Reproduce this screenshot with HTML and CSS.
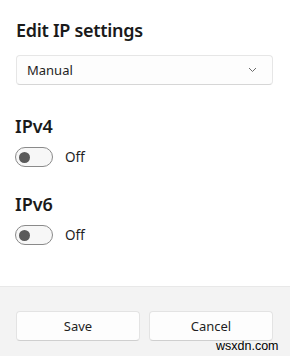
FILE: index.html
```html
<!DOCTYPE html>
<html lang="en">
<head>
<meta charset="utf-8">
<title>Edit IP settings</title>
<link rel="stylesheet" href="styles.css">
</head>
<body>
<div class="dialog">
  <div class="content">
    <h1 class="title">Edit IP settings</h1>
    <div class="select">
      <span class="select-text">Manual</span>
      <svg class="chevron" width="9" height="6" viewBox="0 0 9 6"><path d="M1 1 L4.5 4.5 L8 1" fill="none" stroke="#6b6b6b" stroke-width="1"/></svg>
    </div>
    <section class="ip">
      <h2 class="ip-title">IPv4</h2>
      <div class="toggle-row">
        <span class="toggle"><span class="knob"></span></span>
        <span class="toggle-label">Off</span>
      </div>
    </section>
    <section class="ip ip-second">
      <h2 class="ip-title">IPv6</h2>
      <div class="toggle-row">
        <span class="toggle"><span class="knob"></span></span>
        <span class="toggle-label">Off</span>
      </div>
    </section>
  </div>
  <div class="footer">
    <button class="btn">Save</button>
    <button class="btn">Cancel</button>
  </div>
  <span class="watermark">wsxdn.com</span>
</div>
</body>
</html>
```
FILE: styles.css
```css
html, body {
  margin: 0;
  padding: 0;
  background: #ffffff;
}
body {
  font-family: "Noto Sans", "Open Sans", sans-serif;
  color: #1b1b1b;
}
.dialog {
  position: relative;
  width: 290px;
  height: 356px;
  display: flex;
  flex-direction: column;
  background: #ffffff;
  overflow: hidden;
}
.content {
  padding: 18px 17px 0 16px;
  flex: 1;
}
.title {
  margin: 0;
  font-size: 18px;
  line-height: 24px;
  font-weight: 600;
  letter-spacing: -0.3px;
  color: #1a1a1a;
}
.select {
  margin-top: 13px;
  height: 30px;
  box-sizing: border-box;
  border: 1px solid #e6e6e6;
  border-bottom-color: #d6d6d6;
  border-radius: 4px;
  background: #fdfdfd;
  display: flex;
  align-items: center;
  justify-content: space-between;
  padding: 0 15px 0 10px;
}
.select-text {
  font-size: 13px;
  color: #1f1f1f;
}
.chevron {
  display: block;
}
.ip {
  margin-top: 29px;
  margin-left: -1px;
}
.ip-second {
  margin-top: 25px;
}
.ip-title {
  margin: 0;
  font-size: 18px;
  line-height: 24px;
  font-weight: 600;
  color: #1a1a1a;
}
.toggle-row {
  margin-top: 9px;
  display: flex;
  align-items: center;
  gap: 12px;
  height: 20px;
}
.toggle {
  width: 38px;
  height: 20px;
  box-sizing: border-box;
  border: 1px solid #8a8a8a;
  border-radius: 10px;
  background: #f7f7f7;
  display: flex;
  align-items: center;
  padding-left: 3px;
}
.knob {
  width: 11px;
  height: 11px;
  border-radius: 50%;
  background: #5a5a5a;
}
.toggle-label {
  font-size: 13.5px;
  color: #1f1f1f;
}
.footer {
  height: 70px;
  box-sizing: border-box;
  background: #f3f3f3;
  border-top: 1px solid #e8e8e8;
  display: flex;
  gap: 9px;
  padding: 24px 17px 0 16px;
  align-items: flex-start;
}
.btn {
  flex: 1;
  height: 30px;
  box-sizing: border-box;
  border: 1px solid #e3e3e3;
  border-bottom-color: #cfcfcf;
  border-radius: 4px;
  background: #fdfdfd;
  font-family: "Noto Sans", "Open Sans", sans-serif;
  font-size: 13px;
  color: #1f1f1f;
  padding: 0;
}
.watermark {
  position: absolute;
  left: 216px;
  top: 338px;
  font-family: "Liberation Sans", Arial, sans-serif;
  font-size: 12.5px;
  color: #000000;
  line-height: 16px;
}
```
